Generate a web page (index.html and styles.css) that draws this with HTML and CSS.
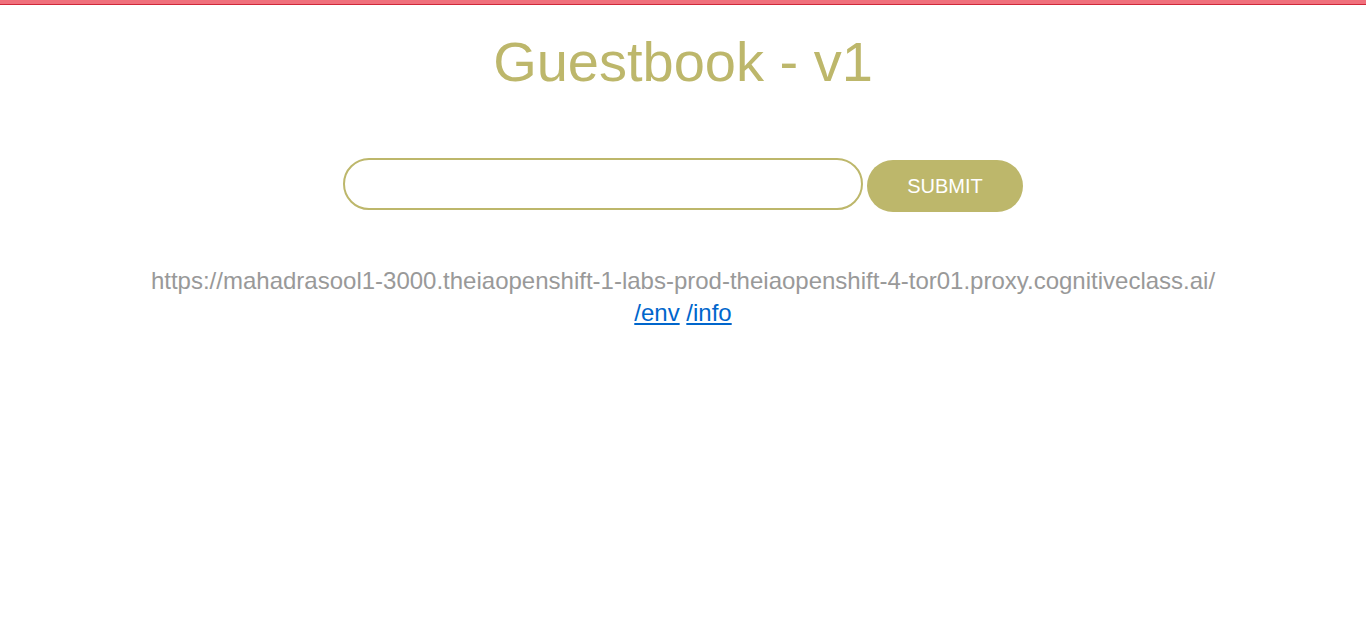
FILE: index.html
```html
<!DOCTYPE html>
<html>
<head>
<meta charset="utf-8">
<title>Guestbook - v1</title>
<link rel="stylesheet" href="styles.css">
</head>
<body>
<div class="topbar"></div>
<main class="page">
  <h1 class="title">Guestbook - v1</h1>
  <form class="entry-form">
    <input class="entry-input" type="text">
    <button class="submit-btn" type="button">SUBMIT</button>
  </form>
  <div class="info">
    <div class="host">https://mahadrasool1-3000.theiaopenshift-1-labs-prod-theiaopenshift-4-tor01.proxy.cognitiveclass.ai/</div>
    <div class="links"><a href="#">/env</a> <a href="#">/info</a></div>
  </div>
</main>
</body>
</html>
```

FILE: styles.css
```css
html, body {
  margin: 0;
  padding: 0;
  background: #ffffff;
  font-family: "Liberation Sans", Arial, sans-serif;
}
.topbar {
  height: 4px;
  background: #f0707c;
  border-bottom: 1px solid #d0283a;
}
.page {
  display: flex;
  flex-direction: column;
  align-items: center;
}
.title {
  margin: 25px 0 0 0;
  font-size: 56px;
  font-weight: normal;
  color: #bdb76b;
  line-height: 64px;
}
.entry-form {
  margin-top: 64px;
  display: flex;
  align-items: flex-start;
  gap: 4px;
}
.entry-input {
  box-sizing: border-box;
  width: 520px;
  height: 52px;
  border: 2px solid #bdb76b;
  border-radius: 26px;
  background: #fff;
  outline: none;
  padding: 0 20px;
  font-size: 20px;
  font-family: inherit;
}
.submit-btn {
  box-sizing: border-box;
  margin-top: 2px;
  width: 156px;
  height: 52px;
  border: none;
  border-radius: 26px;
  background: #bdb76b;
  color: #ffffff;
  font-size: 20px;
  font-family: inherit;
}
.info {
  margin-top: 53px;
  text-align: center;
  font-size: 24px;
  line-height: 32px;
  color: #999999;
}
.links a {
  color: #0066cc;
}
```
